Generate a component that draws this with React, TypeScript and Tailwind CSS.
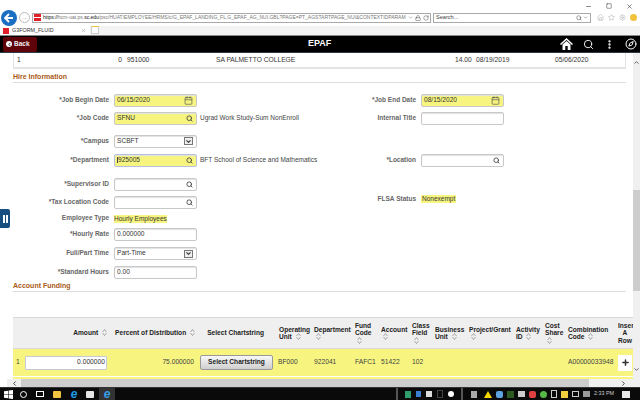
import React from "react";
import { ChevronDown, ChevronLeft, ChevronRight, ChevronUp, Compass, EllipsisVertical, Home, Plus, Search, Star, Settings, Lock, RotateCw, Minus, X, Square, Calendar } from "lucide-react";

const yellow = "bg-[#f7f57f]";

const SortIcon = () => (
  <svg width="5" height="7" viewBox="0 0 5 7" className="inline-block ml-[2px] align-[-1px]">
    <path d="M2.5 .5 L4.5 3 M2.5 .5 L.5 3 M.5 4 L2.5 6.5 L4.5 4" stroke="#888" strokeWidth=".7" fill="none" />
  </svg>
);

const Label = ({ children }: { children: React.ReactNode }) => (
  <div className="font-bold text-[#666] text-[6.5px] leading-none whitespace-nowrap text-right">{children}</div>
);

const FieldBox = ({
  value,
  hl,
  icon,
  focus,
}: {
  value?: string;
  hl?: boolean;
  icon?: "search" | "cal" | "select";
  focus?: boolean;
}) => (
  <div
    className={`w-[83px] h-[13px] flex items-center justify-between pl-[2px] pr-[3px] border rounded-[2px] text-[6.6px] leading-none text-[#333] shadow-[inset_0_1px_1px_#e2e2e2] ${
      hl ? yellow : "bg-white"
    } ${focus ? "border-[#b5c0e0]" : "border-[#c8c8c8]"}`}
  >
    <span className={focus ? "border-l border-[#444]" : ""}>{value}</span>
    {icon === "search" && <Search size={7} strokeWidth={3} className="text-[#444]" />}
    {icon === "cal" && <Calendar size={9} strokeWidth={1.8} className="text-[#555]" />}
    {icon === "select" && (
      <span className="w-[9px] h-[8px] border border-[#777] bg-[#eee] flex items-center justify-center">
        <ChevronDown size={7} strokeWidth={3.5} className="text-[#333]" />
      </span>
    )}
  </div>
);

const FormRow = ({
  h,
  label,
  field,
  note,
  rLabel,
  rField,
  rClass = "",
}: {
  h: string;
  label?: string;
  field?: React.ReactNode;
  note?: string;
  rLabel?: string;
  rField?: React.ReactNode;
  rClass?: string;
}) => (
  <div className={`flex items-center shrink-0 ${h}`}>
    <div className="w-[320px] flex items-center shrink-0">
      <div className="w-[109px]">
        <Label>{label}</Label>
      </div>
      <div className="ml-[5px]">{field}</div>
      {note && <span className="ml-[3px] text-[6.5px] leading-none text-[#444] whitespace-nowrap">{note}</span>}
    </div>
    <div className={`flex items-center ${rClass}`}>
      <div className="w-[96px]">
        <Label>{rLabel}</Label>
      </div>
      <div className="ml-[5px]">{rField}</div>
    </div>
  </div>
);

const Th = ({ w, children, className = "" }: { w: string; children: React.ReactNode; className?: string }) => (
  <div className={`${w} shrink-0 font-bold text-[6.6px] leading-[7.5px] text-[#222] ${className}`}>{children}</div>
);

const Td = ({ w, children, className = "" }: { w: string; children?: React.ReactNode; className?: string }) => (
  <div className={`${w} shrink-0 text-[6.7px] leading-none text-[#444] ${className}`}>{children}</div>
);

const WinLogo = () => (
  <svg width="9" height="9" viewBox="0 0 9 9" fill="#fff">
    <path d="M0 1.3 L4 .7 V4.2 H0 Z M4.6 .6 L9 0 V4.2 H4.6 Z M0 4.8 H4 V8.3 L0 7.7 Z M4.6 4.8 H9 V9 L4.6 8.4 Z" />
  </svg>
);

const HomeSolid = () => (
  <svg width="13" height="12" viewBox="0 0 13 12" fill="#fff" className="ml-[229px]">
    <path d="M6.5 0 L13 6 L12 7 L6.5 2 L1 7 L0 6 Z" />
    <path d="M2.5 6.6 L6.5 3 L10.5 6.6 V12 H7.7 V8 H5.3 V12 H2.5 Z" />
  </svg>
);

const IeE = ({ color = "#1e9be8" }: { color?: string }) => (
  <span className="font-bold italic text-[12px] leading-none" style={{ color }}>
    e
  </span>
);

export default function App() {
  return (
    <div className="w-[640px] h-[400px] overflow-hidden flex flex-col bg-white font-['Liberation_Sans',Arial,sans-serif] relative">
      {/* browser chrome */}
      <div className="h-[35px] shrink-0 flex flex-col bg-white">
        <div className="h-[9px] flex items-center justify-end gap-[14px] pr-[7px] pt-[3px] text-[#333]">
          <Minus size={7} />
          <Square size={6} />
          <X size={7} />
        </div>
        <div className="h-[17px] flex items-center pl-[1px]">
          <div className="w-[16px] h-[16px] rounded-full bg-[#1b6fc2] flex items-center justify-center">
            <svg width="10" height="10" viewBox="0 0 10 10">
              <path d="M1 5 H9 M5 1 L1 5 L5 9" stroke="#fff" strokeWidth="1.8" fill="none" />
            </svg>
          </div>
          <div className="ml-[2px] w-[11px] h-[11px] rounded-full border border-[#bbb] flex items-center justify-center text-[#bbb] text-[7px] leading-none">
            →
          </div>
          <div className="ml-[2px] w-[399px] h-[10px] border border-[#aaa] flex items-center pl-[1px] overflow-hidden">
            <span className="w-[7px] h-[7px] bg-[#e01f26] shrink-0 flex items-center">
              <span className="w-full h-[1px] bg-white" />
            </span>
            <span className="ml-[2px] text-[5px] leading-none text-[#777] whitespace-nowrap">
              <span className="text-[#111]">https://</span>hcm-uat.ps.<span className="text-[#111]">sc.edu</span>
              /psc/HUAT/EMPLOYEE/HRMS/c/G_EPAF_LANDING_FL.G_EPAF_AG_NUI.GBL?PAGE=PT_AGSTARTPAGE_NUI&amp;CONTEXTIDPARAM
            </span>
            <ChevronDown size={5} className="text-[#555] ml-auto shrink-0" />
            <Lock size={6} className="ml-[2px] text-[#555] shrink-0" />
            <RotateCw size={6} className="ml-[2px] mr-[1px] text-[#555] shrink-0" />
          </div>
          <div className="ml-[2px] w-[158px] h-[10px] border border-[#aaa] flex items-center justify-between pl-[2px] pr-[2px] text-[5.6px] leading-none text-[#444]">
            <span>Search...</span>
            <span className="flex items-center gap-[1px]">
              <Search size={6} />
              <ChevronDown size={5} />
            </span>
          </div>
          <div className="ml-[6px] flex items-center gap-[4px] text-[#b5b5b5]">
            <Home size={7} />
            <Star size={7} />
            <Settings size={7} />
            <span className="w-[7px] h-[7px] rounded-full bg-[#f2c13c]" />
          </div>
        </div>
        <div className="h-[9px] flex bg-[#f3f3f3]">
          <div className="w-[90px] bg-white flex items-center pl-[3px]">
            <span className="w-[6px] h-[6px] bg-[#e01f26] shrink-0" />
            <span className="ml-[3px] text-[5.4px] leading-none text-[#333] flex-1">G3FORM_FLUID</span>
            <X size={5} className="text-[#888] mr-[4px]" />
          </div>
          <div className="w-[8px] h-[8px] ml-[1px] bg-white border border-[#ccc] border-t-[#e8c040]" />
        </div>
      </div>
      {/* app banner */}
      <div className="h-[18px] shrink-0 bg-black border-t border-[#888] border-b-[1px] border-b-[#2b3a4a] flex items-center relative">
        <div className="ml-[3px] w-[34px] h-[15px] bg-[#5e0408] rounded-[2px] flex items-center pl-[3px] gap-[2px] text-[#eee] font-bold text-[6.5px]">
          <span className="w-[6px] h-[6px] rounded-full bg-white flex items-center justify-center">
            <ChevronLeft size={5} strokeWidth={4} className="text-black" />
          </span>
          Back
        </div>
        <div className="ml-[271px] text-white font-bold text-[9px]">EPAF</div>
        <HomeSolid />
        <Search size={11} className="ml-[10px] text-white" />
        <EllipsisVertical size={11} strokeWidth={3} className="ml-[10px] text-white" />
        <Compass size={12} className="ml-[10px] text-white" />
      </div>
      {/* body with page scrollbar */}
      <div className="flex-1 flex min-h-0">
        <div className="w-[633px] shrink-0 flex flex-col relative">
          <div className="ml-[13px] w-[613px] h-[16px] shrink-0 border-x border-b-2 border-[#e3e3e3] flex items-center text-[6.7px] leading-none text-[#333] pl-[3px]">
            <span className="w-[101px]">1</span>
            <span className="w-[4px] text-right">0</span>
            <span className="ml-[5px] w-[89px]">951000</span>
            <span className="w-[239px]">SA PALMETTO COLLEGE</span>
            <span className="w-[21px]">14.00</span>
            <span className="w-[79px]">08/19/2019</span>
            <span>05/06/2020</span>
          </div>
          <div className="ml-[13px] w-[613px] h-[13px] mt-[1px] shrink-0 border-b border-[#ddd] flex items-center font-bold text-[7px] leading-none text-[#a85a16]">
            Hire Information
          </div>
          <div className="h-[10px] shrink-0" />
          <FormRow h="h-[14px]" label="*Job Begin Date" field={<FieldBox value="06/15/2020" hl icon="cal" />} rLabel="*Job End Date" rField={<FieldBox value="08/15/2020" hl icon="cal" />} />
          <div className="h-[4px] shrink-0" />
          <FormRow h="h-[14px]" label="*Job Code" field={<FieldBox value="SFNU" hl icon="search" />} note="Ugrad Work Study-Sum NonEnroll" rLabel="Internal Title" rField={<FieldBox />} />
          <div className="h-[9px] shrink-0" />
          <FormRow h="h-[14px]" label="*Campus" field={<FieldBox value="SCBFT" icon="select" />} />
          <div className="h-[5px] shrink-0" />
          <FormRow h="h-[14px]" label="*Department" field={<FieldBox value="925005" hl icon="search" focus />} note="BFT School of Science and Mathematics" rLabel="*Location" rField={<FieldBox icon="search" />} />
          <div className="h-[10px] shrink-0" />
          <FormRow h="h-[14px]" label="*Supervisor ID" field={<FieldBox icon="search" />} />
          <div className="h-[4px] shrink-0" />
          <FormRow
            h="h-[14px]"
            label="*Tax Location Code"
            field={<FieldBox icon="search" />}
            rLabel="FLSA Status"
            rField={<div className={`${yellow} text-[6.5px] leading-[8px] text-[#333] px-[1px]`}>Nonexempt</div>}
            rClass="-translate-y-[3px]"
          />
          <div className="h-[2px] shrink-0" />
          <FormRow h="h-[15px]" label="Employee Type" field={<div className={`${yellow} text-[6.5px] leading-[8px] text-[#333]`}>Hourly Employees</div>} />
          <FormRow h="h-[16px]" label="*Hourly Rate" field={<FieldBox value="0.000000" />} />
          <FormRow h="h-[23px]" label="Full/Part Time" field={<FieldBox value="Part-Time" icon="select" />} />
          <FormRow h="h-[15px]" label="*Standard Hours" field={<FieldBox value="0.00" />} />
          <div className="ml-[13px] w-[613px] h-[12px] shrink-0 border-b border-[#ddd] flex items-center font-bold text-[7px] leading-none text-[#a85a16]">
            Account Funding
          </div>
          <div className="h-[25px] shrink-0" />
          {/* funding grid */}
          <div className="ml-[13px] w-[620px] overflow-hidden shrink-0">
            <div className="h-[32px] flex items-center bg-[#efefef] border-t border-b border-[#d8d8d8] w-[640px]">
              <Th w="w-[94px]" className="text-right">Amount <SortIcon /></Th>
              <Th w="w-[88px]" className="text-right">Percent of Distribution <SortIcon /></Th>
              <Th w="w-[83px]" className="text-right pr-[14px]">Select Chartstring</Th>
              <Th w="w-[36px]" className="pl-[1px]">Operating<br />Unit <SortIcon /></Th>
              <Th w="w-[41px]">Department<br /><SortIcon /></Th>
              <Th w="w-[26px]">Fund<br />Code<br /><SortIcon /></Th>
              <Th w="w-[31px]">Account<br /><SortIcon /></Th>
              <Th w="w-[23px]">Class<br />Field<br /><SortIcon /></Th>
              <Th w="w-[34px]">Business<br />Unit <SortIcon /></Th>
              <Th w="w-[47px]">Project/Grant<br /><SortIcon /></Th>
              <Th w="w-[29px]">Activity<br />ID <SortIcon /></Th>
              <Th w="w-[23px]">Cost<br />Share<br /><SortIcon /></Th>
              <Th w="w-[50px]">Combination<br />Code <SortIcon /></Th>
              <Th w="w-[14px]" className="text-center">Inser<br />A<br />Row</Th>
            </div>
            <div className="h-[28px] flex items-center border-b border-white w-[640px] bg-[#f7f57f]">
              <Td w="w-[12px]" className="pl-[3px]">1</Td>
              <div className="w-[82px] h-[14px] shrink-0 bg-white border border-[#c4c8d8] rounded-[1px] flex items-center justify-end pr-[1px] text-[6.7px] leading-none text-[#333]">
                0.000000
              </div>
              <Td w="w-[88px]" className="text-right pr-[1px]">75.000000</Td>
              <div className="ml-[5px] w-[73px] h-[15px] shrink-0 rounded-[2px] border border-[#999] bg-gradient-to-b from-[#f8f8f8] to-[#cfcfcf] flex items-center justify-center font-bold text-[6.6px] leading-none text-[#222]">
                Select Chartstring
              </div>
              <Td w="w-[36px]" className="ml-[5px]">BF000</Td>
              <Td w="w-[41px]">922041</Td>
              <Td w="w-[26px]">FAFC1</Td>
              <Td w="w-[31px]">51422</Td>
              <Td w="w-[23px]">102</Td>
              <Td w="w-[34px]" />
              <Td w="w-[47px]" />
              <Td w="w-[29px]" />
              <Td w="w-[23px]" />
              <Td w="w-[50px]">A00000033948</Td>
              <div className="w-[14px] h-[16px] shrink-0 bg-white flex items-center justify-center">
                <Plus size={9} strokeWidth={4} className="text-[#333]" />
              </div>
            </div>
            <div className="h-[2px] bg-[#f7f57f]" />
          </div>
          <div className="ml-[7px] h-[8px] shrink-0 flex items-center bg-[#cdcdcd] w-[626px]">
            <div className="w-[14px] h-full bg-[#f0f0f0] flex items-center justify-center">
              <ChevronLeft size={7} strokeWidth={3} className="text-[#333]" />
            </div>
            <div className="flex-1" />
            <div className="w-[44px] h-full bg-[#f0f0f0] flex items-center justify-end pr-[6px]">
              <ChevronRight size={7} strokeWidth={3} className="text-[#333]" />
            </div>
          </div>
          {/* pane collapse tab */}
          <div className="absolute left-0 top-[156px] w-[10px] h-[19px] bg-[#174f80] rounded-r-[2px] flex items-center justify-center gap-[1px]">
            <span className="w-[2px] h-[8px] bg-white" />
            <span className="w-[2px] h-[8px] bg-white" />
          </div>
        </div>
        <div className="flex-1 bg-[#f0f0f0] flex flex-col items-center pt-[6px]">
          <ChevronUp size={7} strokeWidth={3} className="text-[#555] shrink-0" />
          <div className="mt-[124px] w-full h-[101px] bg-[#cdcdcd] shrink-0" />
          <ChevronDown size={7} strokeWidth={3} className="text-[#555] mt-[75px] shrink-0" />
        </div>
      </div>
      {/* windows taskbar */}
      <div className="h-[13px] shrink-0 bg-[#0a0a0a] border-t border-[#333] flex items-center pl-[4px]">
        <WinLogo />
        <span className="ml-[7px] w-[7px] h-[7px] rounded-full border border-white" />
        <span className="ml-[9px] w-[8px] h-[6px] border border-white" />
        <span className="ml-[9px] w-[8px] h-[7px] bg-[#f3c440] rounded-[1px]" />
        <span className="ml-[8px] w-[10px] flex justify-center"><IeE /></span>
        <span className="ml-[7px] w-[8px] h-[7px] bg-[#e6e6e6] rounded-[1px]" />
        <span className="ml-[5px] w-[16px] h-[13px] bg-[#333] border-b border-[#e07070] flex items-center justify-center"><IeE color="#38a0e8" /></span>
        <div className="flex-1" />
        <div className="w-[67px] h-[13px] border-x-2 border-[#555] flex items-center justify-center gap-[5px]">
          <span className="w-[6px] h-[7px] bg-[#2f9e6d]" />
          <span className="w-[5px] h-[6px] bg-[#3a7fd0]" />
          <span className="w-[6px] h-[6px] bg-[#ddd]" />
          <span className="w-[6px] h-[8px] border border-[#444]" />
          <span className="w-[6px] h-[6px] rounded-full bg-white" />
        </div>
        <div className="ml-[8px] w-[169px] flex items-center gap-[4px]">
          <span className="w-[6px] h-[7px] bg-[#aaa] mr-[3px]" />
          <span className="w-0 h-0 border-x-[4px] border-x-transparent border-b-[7px] border-b-[#f5d800]" />
          <span className="w-[7px] h-[7px] rounded-[2px] bg-[#5fa3e0]" />
          <span className="w-[7px] h-[7px] bg-[#2c5a20]" />
          <span className="w-[7px] h-[6px] bg-[#ccc]" />
          <span className="w-[7px] h-[7px] rounded-[2px] bg-[#e04040]" />
          <span className="w-[7px] h-[7px] rounded-full bg-[#55b847]" />
          <span className="w-[6px] h-[8px] border border-[#ccc]" />
          <span className="w-[7px] h-[7px] bg-[#f0d040]" />
          <span className="w-[7px] h-[6px] border border-[#ccc]" />
          <span className="w-[7px] h-[6px] bg-[#999]" />
          <span className="text-[5.4px] leading-none text-[#ccc] whitespace-nowrap">2:33 PM</span>
          <span className="ml-[4px] w-[8px] h-[7px] bg-[#e8e8e8]" />
        </div>
      </div>
    </div>
  );
}
